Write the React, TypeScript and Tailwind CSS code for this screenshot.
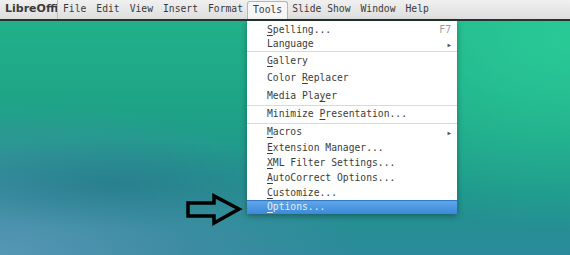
import React from "react";

interface MenuItem {
  label: React.ReactNode;
  h: string;
  hint?: string;
  sub?: boolean;
  active?: boolean;
}

const U = ({ c }: { c: string }) => <span className="underline underline-offset-2">{c}</span>;

const groups: MenuItem[][] = [
  [
    { label: <><U c="S" />pelling...</>, h: "h-[14px]", hint: "F7" },
    { label: "Language", h: "h-[14px]", sub: true },
  ],
  [
    { label: <><U c="G" />allery</>, h: "h-[18px]" },
    { label: <>Color <U c="R" />eplacer</>, h: "h-[17px]" },
    { label: <>Media Pla<U c="y" />er</>, h: "h-[18px]" },
  ],
  [{ label: <>Minimize <U c="P" />resentation...</>, h: "h-[17px]" }],
  [
    { label: <><U c="M" />acros</>, h: "h-[17px]", sub: true },
    { label: <><U c="E" />xtension Manager...</>, h: "h-[15px]" },
    { label: <><U c="X" />ML Filter Settings...</>, h: "h-[15px]" },
    { label: <><U c="A" />utoCorrect Options...</>, h: "h-[15px]" },
    { label: <><U c="C" />ustomize...</>, h: "h-[14px]" },
    { label: <><U c="O" />ptions...</>, h: "h-[14px]", active: true },
  ],
];

const menus = ["File", "Edit", "View", "Insert", "Format"];
const menusAfter = ["Slide Show", "Window", "Help"];

export default function App() {
  return (
    <div className="relative w-[570px] h-[255px] overflow-hidden bg-[radial-gradient(ellipse_35%_18%_at_20%_72%,rgba(26,112,128,0.5)_0%,transparent_100%),radial-gradient(ellipse_65%_60%_at_0%_100%,#5696b6_0%,rgba(74,140,170,0.6)_50%,transparent_100%),radial-gradient(ellipse_55%_75%_at_100%_15%,#29c996_0%,transparent_100%),linear-gradient(180deg,#22b48b_0%,#1ea487_40%,#1f938c_75%,#2b8a9a_100%)] font-['DejaVu_Sans_Mono',monospace]">
      {/* Menu bar */}
      <div className="h-[21px] flex items-end bg-[linear-gradient(180deg,#f0f0f0,#dedede)] border-b-2 border-[#23342d] text-[9.7px] text-[#3a3a3a]">
        <div className="h-full flex items-center pl-[5px] w-[58px] border-r border-[#bdbdbd] font-['DejaVu_Sans',sans-serif] font-bold text-[11px] text-[#3c3c3c] overflow-hidden whitespace-nowrap">
          LibreOffi
        </div>
        <div className="h-full flex items-center gap-[10px] pl-[5px]">
          {menus.map((m) => (
            <span key={m}>{m}</span>
          ))}
        </div>
        <div className="h-[18px] ml-[4px] px-[5px] flex items-center bg-[#f6f6f6] border border-b-0 border-[#b5b5b5] rounded-t-[3px]">
          Tools
        </div>
        <div className="h-full flex items-center gap-[10px] pl-[4px]">
          {menusAfter.map((m) => (
            <span key={m}>{m}</span>
          ))}
        </div>
      </div>

      {/* Tools dropdown */}
      <div className="absolute left-[247px] top-[21px] w-[210px] bg-white pt-[2px] shadow-[0_2px_6px_rgba(0,0,0,0.35)] text-[9.7px] text-[#3c3c3c]">
        {groups.map((g, gi) => (
          <div key={gi} className={gi > 0 ? "border-t border-[#d9d9d9]" : ""}>
            {g.map((it, i) => (
              <div
                key={i}
                className={`${it.h} flex items-center justify-between pl-[20px] pr-[6px] ${
                  it.active
                    ? "bg-[linear-gradient(180deg,#5ea6ea,#3c89d9)] border-t border-[#3478c2] text-[#e3eefb]"
                    : ""
                }`}
              >
                <span className="whitespace-pre">{it.label}</span>
                {it.hint && <span className="text-[#9a9a9a]">{it.hint}</span>}
                {it.sub && <span className="text-[6px] text-[#555]">▶</span>}
              </div>
            ))}
          </div>
        ))}
      </div>

      {/* Arrow pointing at Options */}
      <svg className="absolute left-[184px] top-[193px]" width="60" height="34" viewBox="0 0 60 34">
        <path
          d="M4 10 H30 V3 L55 16 L30 30 V23 H4 Z"
          fill="none"
          stroke="#000"
          strokeWidth="3.5"
          strokeLinejoin="miter"
        />
      </svg>
    </div>
  );
}
